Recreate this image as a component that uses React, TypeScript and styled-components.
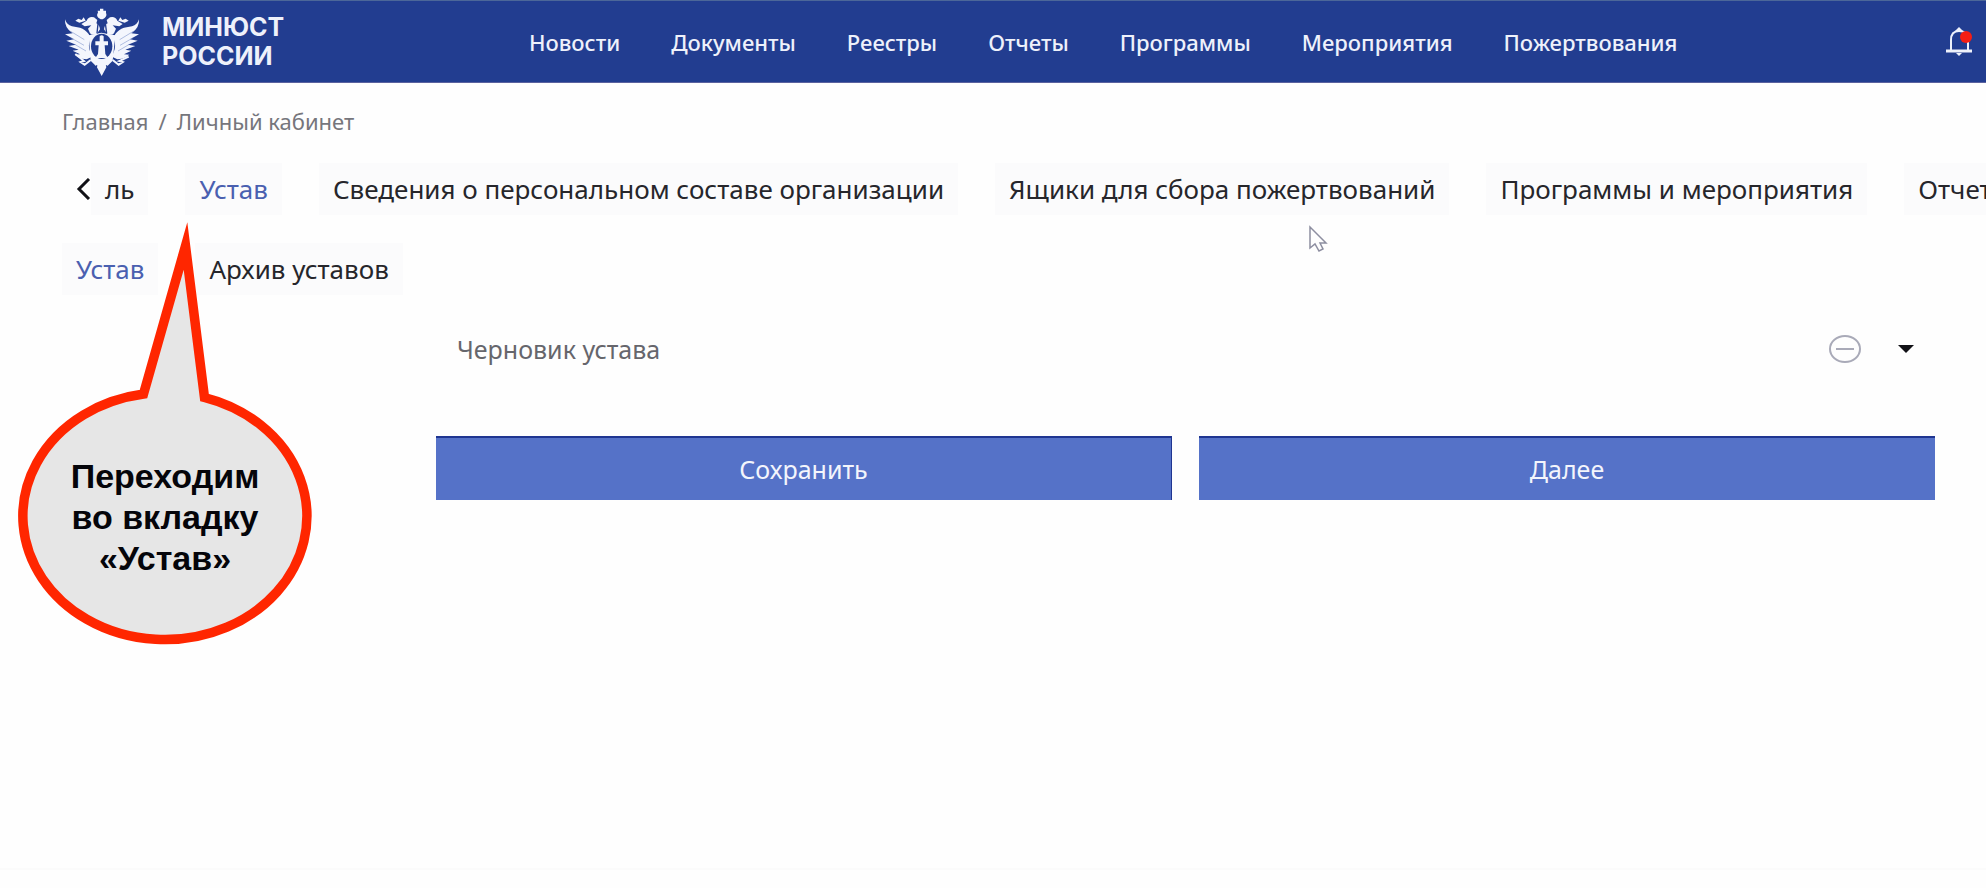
import React from "react";
import styled, { createGlobalStyle } from "styled-components";

const GlobalStyle = createGlobalStyle`
  * { box-sizing: border-box; }
  body {
    margin: 0;
    background: #fefefe;
    color: #26262b;
    font-family: "Noto Sans", "Open Sans", sans-serif;
    font-size: 22px;
    line-height: 30px;
  }
  button { font: inherit; color: inherit; border: 0; background: none; padding: 0; cursor: pointer; }
  a { color: inherit; text-decoration: none; }
  svg { display: block; }
`;

const Page = styled.div`
  position: relative;
  min-height: 100vh;
  overflow-x: hidden;
  display: flex;
  flex-direction: column;
`;

const Header = styled.header`
  display: flex;
  align-items: center;
  height: 83px;
  padding: 0 14px 0 64px;
  background: #223d90;
  border-top: 1px solid #4c6799;
  border-bottom: 1px solid #5b629f;
  color: #eef1fb;
`;

const Brand = styled.a`
  display: flex;
  align-items: center;
  gap: 22px;
  width: 465px;
  flex-shrink: 0;
`;

const BrandName = styled.span`
  font-family: Inter, "Noto Sans", sans-serif;
  font-size: 25px;
  line-height: 29px;
  font-weight: 700;
`;

const Nav = styled.nav`
  display: flex;
  gap: 51px;
  font-weight: 500;
  white-space: nowrap;
`;

const BellButton = styled.button`
  margin-left: auto;
`;

const Breadcrumbs = styled.nav`
  display: flex;
  gap: 10px;
  padding: 23px 62px 0;
  color: #76767c;
`;

const TabStrip = styled.div`
  display: flex;
  align-items: center;
  padding-left: 76px;
  margin-top: 27px;
  overflow: hidden;
`;

const ScrollBack = styled.button`
  display: flex;
  width: 15px;
  flex-shrink: 0;
`;

const TabList = styled.div<{ $inset?: number }>`
  display: flex;
  gap: 37px;
  padding-left: ${(p) => p.$inset ?? 0}px;
`;

const Tab = styled.button<{ $active?: boolean }>`
  flex-shrink: 0;
  padding: 11px 14px;
  background: #fbfbfc;
  font-size: 26px;
  white-space: nowrap;
  color: ${(p) => (p.$active ? "#4a60b0" : "#26262b")};
`;

const SubTabs = styled.div`
  margin-top: 28px;
`;

const Content = styled.main`
  padding: 30px 51px 0 436px;
  font-size: 25px;
`;

const DraftRow = styled.div`
  display: flex;
  align-items: center;
  height: 48px;
  padding: 0 21px;
  color: #66666c;
`;

const DraftActions = styled.div`
  display: flex;
  align-items: center;
  gap: 36px;
  margin-left: auto;
`;

const FormActions = styled.div`
  display: grid;
  grid-template-columns: 1fr 1fr;
  gap: 27px;
  margin-top: 63px;
`;

const PrimaryButton = styled.button<{ $edge?: boolean }>`
  height: 64px;
  background: #5572c8;
  color: #f3f5fc;
  border-top: 2px solid #1f3591;
  border-right: ${(p) => (p.$edge ? "1px solid #1f3591" : "0")};
`;

const Footer = styled.footer`
  margin-top: auto;
  height: 20px;
  border-top: 2px solid #fbfbfb;
`;

const Callout = styled.aside`
  position: absolute;
  left: 18px;
  top: 220px;
  width: 294px;
  height: 426px;
`;

const CalloutText = styled.p`
  position: absolute;
  inset: 236px 0 auto;
  margin: 0;
  text-align: center;
  font: bold 34px/41px "Liberation Sans", Arial, sans-serif;
  color: #05050a;
`;

const Pointer = styled.svg`
  position: absolute;
  left: 1308px;
  top: 225px;
`;

const Emblem = () => (
  <svg width="76" height="68" viewBox="44 22 228 204" fill="#f4f6fd" aria-hidden="true">
    <path d="M47 56 Q52 72 68 77 L92 81 Q108 86 118 100 L124 112 Q116 126 120 146 L128 168 L112 176 Q98 176 86 170 L76 162 L92 161 L70 150 L88 147 L58 136 L80 132 L51 120 L74 116 L47 101 L70 98 Q45 82 47 56Z" />
    <path d="M269 56 Q264 72 248 77 L224 81 Q208 86 198 100 L192 112 Q200 126 196 146 L188 168 L204 176 Q218 176 230 170 L240 162 L224 161 L246 150 L228 147 L258 136 L236 132 L265 120 L242 116 L269 101 L246 98 Q271 82 269 56Z" />
    <path d="M152 24 H162 V30 H170 V37 Q174 45 166 52 L160 56 H154 L147 51 Q140 43 146 36 L145 30 H152Z" />
    <path d="M112 60 Q118 46 134 50 L144 58 L141 68 Q150 72 152 86 L142 100 Q130 106 122 98 L116 84 L126 74 L106 77 L96 70Z" />
    <path d="M204 60 Q198 46 182 50 L172 58 L175 68 Q166 72 164 86 L174 100 Q186 106 194 98 L200 84 L190 74 L210 77 L220 70Z" />
    <path d="M118 104 L156 96 L198 104 L190 180 L172 198 L157 226 L142 198 L124 180Z" />
    <ellipse cx="157" cy="137" rx="32" ry="38" fill="#223d90" />
    <path d="M151 107 Q157 101 163 107 V122 H176 V134 H166 L168 160 L176 172 H138 L146 160 L148 134 H138 V122 H151Z" />
    <path d="M124 178 L106 192 L94 184 L104 181 L78 160 M190 178 L208 192 L220 184 L210 181 L238 168" fill="none" stroke="#f4f6fd" strokeWidth="6" />
    <path d="M90 66 l-12 -6 l9 -6 l10 4 l6 -8 l6 10 z M226 66 l12 -6 l-9 -6 l-10 4 l-6 -8 l-6 10 z" />
    <path d="M143 194 L132 212 M171 194 L182 212 M147 60 L143 98 M167 60 L172 98" stroke="#223d90" strokeWidth="4" />
    <path d="M64 92 L105 117 M66 112 L104 134 M76 131 L110 151 M252 92 L211 117 M250 112 L212 134 M240 131 L206 151" stroke="#8da0d2" strokeWidth="2" />
  </svg>
);

const Bell = () => (
  <svg width="26" height="30" viewBox="0 0 26 30" fill="none">
    <path d="M5 23 V13 Q5 4 13 4 Q22 4 22 13 V23" stroke="#eef1fb" strokeWidth="2" />
    <path d="M9 4 L13 0 L17 4Z" fill="#eef1fb" />
    <path d="M0 24 H26" stroke="#eef1fb" strokeWidth="3" />
    <path d="M10 26 H16 L13 29Z" fill="#eef1fb" />
    <circle cx="20" cy="10" r="6" fill="#f51e14" />
  </svg>
);

const navItems = ["Новости", "Документы", "Реестры", "Отчеты", "Программы", "Мероприятия", "Пожертвования"];

const tabs = [
  "ль",
  "Устав",
  "Сведения о персональном составе организации",
  "Ящики для сбора пожертвований",
  "Программы и мероприятия",
  "Отчеты",
];

const subTabs = ["Устав", "Архив уставов"];

export default function App() {
  return (
    <Page>
      <GlobalStyle />
      <Header>
        <Brand href="#">
          <Emblem />
          <BrandName>
            МИНЮСТ
            <br />
            РОССИИ
          </BrandName>
        </Brand>
        <Nav>
          {navItems.map((item) => (
            <a href="#" key={item}>{item}</a>
          ))}
        </Nav>
        <BellButton aria-label="Уведомления">
          <Bell />
        </BellButton>
      </Header>

      <Breadcrumbs>
        <a href="#">Главная</a>
        <span>/</span>
        <a href="#">Личный кабинет</a>
      </Breadcrumbs>

      <TabStrip>
        <ScrollBack aria-label="Назад">
          <svg width="15" height="22" viewBox="0 0 15 22" fill="none" stroke="#111116" strokeWidth="3">
            <path d="M13 1 L3 11 L13 21" />
          </svg>
        </ScrollBack>
        <TabList role="tablist">
          {tabs.map((tab) => (
            <Tab key={tab} role="tab" aria-selected={tab === "Устав"} $active={tab === "Устав"}>
              {tab}
            </Tab>
          ))}
        </TabList>
      </TabStrip>

      <SubTabs>
        <TabList role="tablist" $inset={62}>
          {subTabs.map((tab) => (
            <Tab key={tab} role="tab" aria-selected={tab === "Устав"} $active={tab === "Устав"}>
              {tab}
            </Tab>
          ))}
        </TabList>
      </SubTabs>

      <Content>
        <DraftRow>
          <span>Черновик устава</span>
          <DraftActions>
            <button aria-label="Удалить черновик">
              <svg width="34" height="30" viewBox="0 0 34 30" fill="none" stroke="#a9aab8" strokeWidth="2">
                <ellipse cx="17" cy="15" rx="15" ry="13" />
                <path d="M8 15 H26" />
              </svg>
            </button>
            <button aria-label="Развернуть">
              <svg width="16" height="8" viewBox="0 0 16 8" fill="#111116">
                <path d="M0 0 H16 L8 8Z" />
              </svg>
            </button>
          </DraftActions>
        </DraftRow>
        <FormActions>
          <PrimaryButton $edge>Сохранить</PrimaryButton>
          <PrimaryButton>Далее</PrimaryButton>
        </FormActions>
      </Content>

      <Footer />

      <Callout>
        <svg width="294" height="426" viewBox="18 220 294 426" aria-hidden="true">
          <path
            d="M143.5 394 L185.5 246 L204.5 397.5 A142 123.5 0 1 1 143.5 394Z"
            fill="#e6e6e6"
            stroke="#ff2600"
            strokeWidth="9.5"
            strokeMiterlimit="10"
          />
        </svg>
        <CalloutText>
          Переходим
          <br />
          во вкладку
          <br />
          «Устав»
        </CalloutText>
      </Callout>

      <Pointer width="20" height="28" viewBox="0 0 20 28" fill="#fefefe" stroke="#8d8ea0" strokeWidth="1.5" aria-hidden="true">
        <path d="M2 2 V23 L7 19 L11 26 L15 24 L12 18 H18Z" />
      </Pointer>
    </Page>
  );
}
